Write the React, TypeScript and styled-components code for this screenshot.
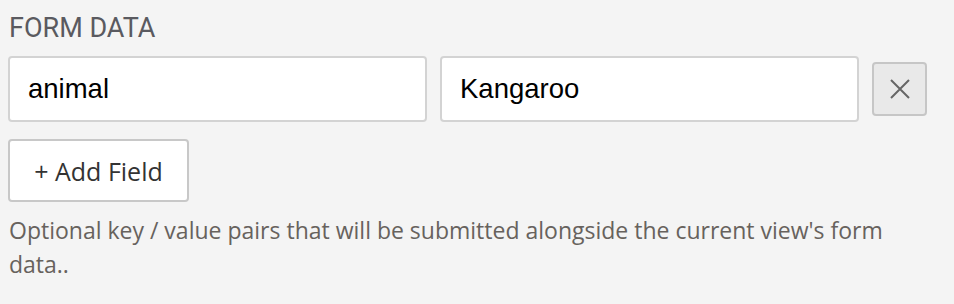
import styled, { createGlobalStyle } from 'styled-components';

const GlobalStyle = createGlobalStyle`
  html, body {
    margin: 0;
    padding: 0;
    background-color: #f4f4f4;
  }
`;

const Panel = styled.section`
  width: 919px;
  padding: 12px 0 0 8px;
  display: flex;
  flex-direction: column;
`;

const Title = styled.h3`
  margin: 0 0 0 1px;
  font-family: Roboto, 'Liberation Sans', sans-serif;
  font-weight: 400;
  font-size: 27px;
  line-height: 32px;
  color: #5a5a60;
`;

const FieldRow = styled.div`
  margin-top: 12px;
  display: flex;
  align-items: center;
  gap: 13px;
`;

const TextInput = styled.input.attrs({ type: 'text' })`
  flex: 1;
  min-width: 0;
  height: 66px;
  box-sizing: border-box;
  margin: 0;
  padding: 0 18px;
  border: 2px solid #d3d3d3;
  border-radius: 4px;
  background-color: #fff;
  font-family: 'Liberation Sans', Arial, sans-serif;
  font-size: 27.5px;
  color: #000;
  outline: none;
`;

const RemoveButton = styled.button`
  flex: none;
  width: 55px;
  height: 54px;
  box-sizing: border-box;
  padding: 0;
  border: 2px solid #c6c6c6;
  border-radius: 4px;
  background-color: #e9e9e9;
  display: flex;
  align-items: center;
  justify-content: center;
  cursor: pointer;
`;

const AddButton = styled.button`
  align-self: flex-start;
  margin-top: 17px;
  width: 181px;
  height: 63px;
  box-sizing: border-box;
  border: 2px solid #c8c8c8;
  border-radius: 4px;
  background-color: #fff;
  font-family: 'Open Sans', sans-serif;
  font-size: 25px;
  color: #333;
  cursor: pointer;
`;

const HelpText = styled.p`
  margin: 11px 0 0 1px;
  font-family: 'Open Sans', sans-serif;
  font-size: 23px;
  line-height: 34px;
  color: #67625d;
`;

const App = () => {
  return (
    <>
      <GlobalStyle />
      <Panel>
        <Title>FORM DATA</Title>
        <FieldRow>
          <TextInput defaultValue="animal" />
          <TextInput defaultValue="Kangaroo" />
          <RemoveButton aria-label="Remove field">
            <svg width="22" height="22" viewBox="0 0 22 22">
              <path d="M2 2 L20 20 M20 2 L2 20" stroke="#666" strokeWidth="2" fill="none" />
            </svg>
          </RemoveButton>
        </FieldRow>
        <AddButton>+ Add Field</AddButton>
        <HelpText>
          Optional key / value pairs that will be submitted alongside the current view's form data..
        </HelpText>
      </Panel>
    </>
  );
};

export default App;
